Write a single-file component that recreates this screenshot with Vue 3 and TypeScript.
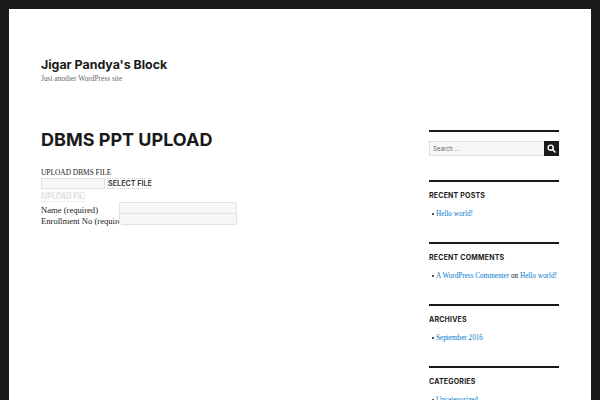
<template>
  <div class="frame">
    <div class="page">
      <header class="site-header">
        <h1>Jigar Pandya's Block</h1>
        <p>Just another WordPress site</p>
      </header>

      <div class="columns">
        <main class="content">
          <h2>DBMS PPT UPLOAD</h2>
          <div class="form">
            <div class="form-label">UPLOAD DBMS FILE</div>
            <div class="file-row">
              <span class="file-box"></span>
              <span class="select-btn">SELECT FILE</span>
            </div>
            <div class="upload-btn"><span>UPLOAD FILE</span></div>
            <div class="field">
              <label>Name (required)</label>
              <span class="input"></span>
            </div>
            <div class="field">
              <label>Enrollment No (required)</label>
              <span class="input"></span>
            </div>
          </div>
        </main>

        <aside class="sidebar">
          <section class="widget search">
            <div class="search-row">
              <span class="search-input">Search ...</span>
              <span class="search-btn">
                <svg width="9" height="9" viewBox="0 0 16 16" fill="none" stroke="#fff" stroke-width="2.6">
                  <circle cx="6.5" cy="6.5" r="4.5" />
                  <path d="M10 10l5 5" />
                </svg>
              </span>
            </div>
          </section>
          <section v-for="w in widgets" :key="w.title" class="widget">
            <h3>{{ w.title }}</h3>
            <ul>
              <li v-for="(item, i) in w.items" :key="i">
                <template v-for="(part, j) in item" :key="j">
                  <a v-if="part.link">{{ part.text }}</a>
                  <template v-else>{{ part.text }}</template>
                </template>
              </li>
            </ul>
          </section>
        </aside>
      </div>
    </div>
  </div>
</template>

<script setup lang="ts">
interface Part {
  text: string;
  link: boolean;
}

const widgets: { title: string; items: Part[][] }[] = [
  { title: 'Recent Posts', items: [[{ text: 'Hello world!', link: true }]] },
  {
    title: 'Recent Comments',
    items: [
      [
        { text: 'A WordPress Commenter', link: true },
        { text: ' on ', link: false },
        { text: 'Hello world!', link: true },
      ],
    ],
  },
  { title: 'Archives', items: [[{ text: 'September 2016', link: true }]] },
  { title: 'Categories', items: [[{ text: 'Uncategorized', link: true }]] },
];
</script>

<style>
html,
body {
  margin: 0;
  background: #1a1a1a;
}
</style>

<style scoped>
.frame {
  height: 400px;
  box-sizing: border-box;
  padding: 9px 9px 0;
  overflow: hidden;
  background: #1a1a1a;
  font-family: "Liberation Serif", serif;
  color: #1a1a1a;
}

.page {
  height: 391px;
  box-sizing: border-box;
  padding: 0 32px;
  background: #fff;
  overflow: hidden;
}

.site-header {
  padding-top: 47px;
}

h1 {
  margin: 0;
  font: 700 12.4px/18px Inter, "DejaVu Sans", sans-serif;
}

.site-header p {
  margin: -1px 0 0;
  font-size: 7.4px;
  line-height: 11px;
  color: #686868;
}

.columns {
  display: flex;
  justify-content: space-between;
  margin-top: 43px;
}

.content {
  width: 300px;
}

h2 {
  margin: 0;
  font: 700 18px/26px Inter, "DejaVu Sans", sans-serif;
}

.form {
  margin-top: 14px;
  font-size: 8.6px;
  line-height: 11px;
}

.form-label {
  font-size: 7.4px;
}

.file-row {
  display: flex;
  height: 11px;
}

.file-box {
  width: 64px;
  box-sizing: border-box;
  background: #f7f7f7;
  border: 1px solid #e0e0e0;
}

.select-btn {
  margin-left: 2px;
  width: 44px;
  border: 1px dotted #ccc;
  box-sizing: border-box;
  text-align: center;
  font: 700 7.2px/9px Inter, "DejaVu Sans", sans-serif;
  color: #444;
  white-space: nowrap;
}

.upload-btn {
  width: 44px;
  height: 10px;
  margin-top: 3px;
  box-sizing: border-box;
  border: 1px solid #eee;
  overflow: hidden;
  font: 700 7.2px/8px Inter, "DejaVu Sans", sans-serif;
  color: #ddd;
  white-space: nowrap;
}

.field {
  display: flex;
  height: 11px;
}

.upload-btn + .field {
  margin-top: 3px;
}

.field label {
  flex: 0 0 78px;
  width: 78px;
  min-width: 0;
  white-space: nowrap;
}

.input {
  position: relative;
  flex: none;
  width: 118px;
  height: 12px;
  margin-top: -3px;
  box-sizing: border-box;
  background: #f7f7f7;
  border: 1px solid #e4e4e4;
}

.sidebar {
  width: 130px;
  margin-top: 3px;
}

.widget {
  border-top: 2px solid #1a1a1a;
  padding-top: 9px;
  height: 51px;
  overflow: hidden;
}

.widget.search {
  height: 39px;
}

.search-row {
  display: flex;
  height: 15px;
}

.search-input {
  flex: 1;
  box-sizing: border-box;
  padding-left: 3px;
  background: #f7f7f7;
  border: 1px solid #e0e0e0;
  border-right: 0;
  font: 6px/13px Inter, "DejaVu Sans", sans-serif;
  color: #686868;
}

.search-btn {
  width: 15px;
  display: flex;
  align-items: center;
  justify-content: center;
  background: #1a1a1a;
}

h3 {
  margin: 0;
  font: 700 7px/10px Inter, "DejaVu Sans", sans-serif;
  letter-spacing: 0.2px;
  text-transform: uppercase;
}

ul {
  margin: 8px 0 0;
  padding: 0 0 0 7px;
  list-style: none;
  font-size: 7.2px;
  line-height: 10px;
}

li {
  white-space: nowrap;
}

li::before {
  content: "";
  display: inline-block;
  width: 2px;
  height: 2px;
  margin: 0 2px 1px -4px;
  border-radius: 50%;
  background: #1a1a1a;
}

a {
  color: #007acc;
}
</style>
